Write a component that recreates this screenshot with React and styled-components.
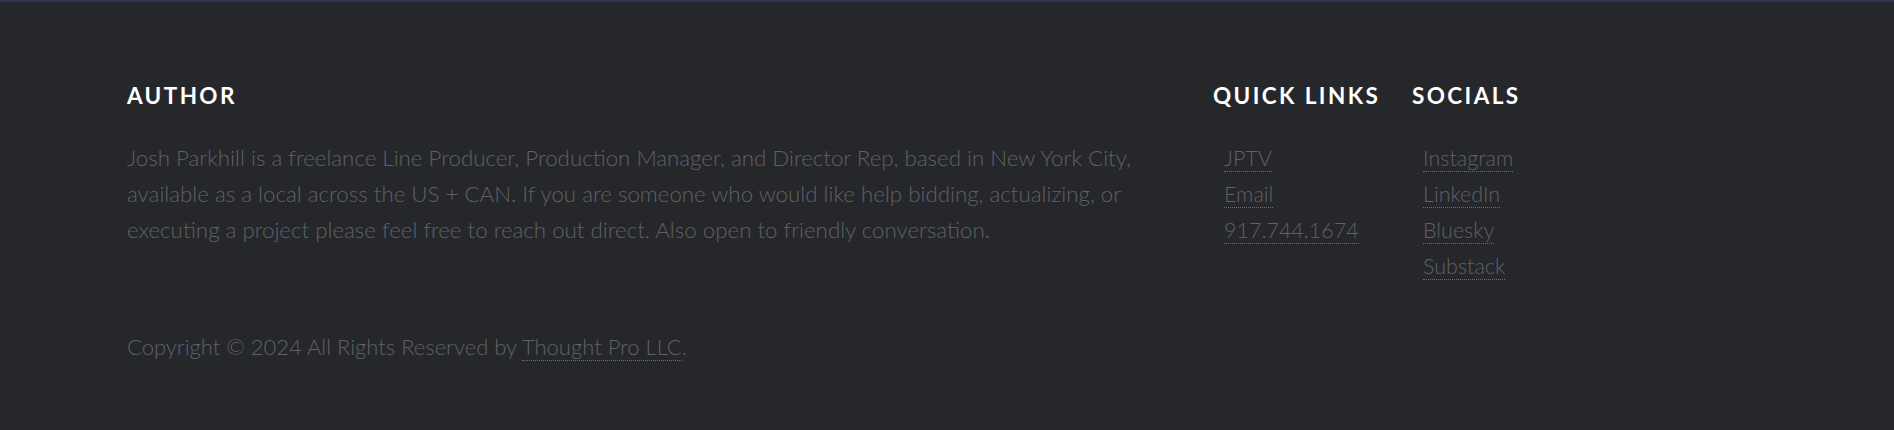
import styled, { createGlobalStyle } from "styled-components";

const GlobalStyle = createGlobalStyle`
  html, body {
    margin: 0;
    padding: 0;
    background: #26272b;
  }
  * { box-sizing: border-box; }
`;

const quickLinks = ["JPTV", "Email", "917.744.1674"];
const socials = ["Instagram", "LinkedIn", "Bluesky", "Substack"];

export default function App() {
  return (
    <>
      <GlobalStyle />
      <Footer>
        <Row>
          <Column>
            <Heading>Author</Heading>
            <About>
              Josh Parkhill is a freelance Line Producer, Production Manager, and Director Rep, based in New York City,
              available as a local across the US + CAN. If you are someone who would like help bidding, actualizing, or
              executing a project please feel free to reach out direct. Also open to friendly conversation.
            </About>
          </Column>
          <Column>
            <Heading>Quick Links</Heading>
            <LinkList>
              {quickLinks.map((l) => (
                <li key={l}>
                  <Link href="#">{l}</Link>
                </li>
              ))}
            </LinkList>
          </Column>
          <Column>
            <Heading>Socials</Heading>
            <LinkList>
              {socials.map((l) => (
                <li key={l}>
                  <Link href="#">{l}</Link>
                </li>
              ))}
            </LinkList>
          </Column>
        </Row>
        <Copyright>
          Copyright © 2024 All Rights Reserved by <Link href="#">Thought Pro LLC</Link>.
        </Copyright>
      </Footer>
    </>
  );
}

const Footer = styled.footer`
  height: 430px;
  border-top: 2px solid #2e3150;
  padding: 80px 0 0 127px;
  font-family: Lato, "Liberation Sans", sans-serif;
  font-weight: 300;
  color: #5e6168;
`;

const Row = styled.div`
  display: grid;
  grid-template-columns: 1086px 199px auto;
`;

const Column = styled.div`
  display: flex;
  flex-direction: column;
`;

const Heading = styled.h2`
  margin: 0 0 30px;
  font-size: 22.5px;
  line-height: 27.6px;
  font-weight: 700;
  letter-spacing: 2.4px;
  text-transform: uppercase;
  color: #ffffff;
`;

const About = styled.p`
  margin: 0;
  max-width: 1030px;
  font-size: 22.3px;
  line-height: 36px;
`;

const LinkList = styled.ul`
  list-style: none;
  margin: 0;
  padding: 0 0 0 11px;
  font-size: 21.5px;
  line-height: 36px;
`;

const Link = styled.a`
  color: inherit;
  text-decoration: none;
  border-bottom: 1px dotted #6a6d73;
`;

const Copyright = styled.p`
  margin: 45px 0 0;
  font-size: 22px;
  line-height: 36px;
`;
